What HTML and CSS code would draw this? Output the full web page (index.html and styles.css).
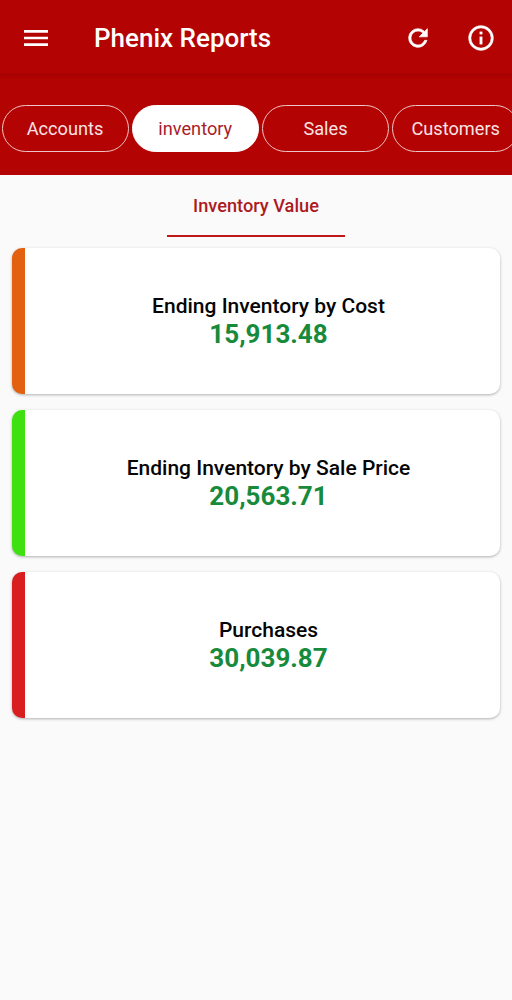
FILE: index.html
```html
<!DOCTYPE html>
<html lang="en">
<head>
<meta charset="utf-8">
<title>Phenix Reports</title>
<link rel="stylesheet" href="styles.css">
</head>
<body>
<header class="appbar">
  <button class="icon-btn menu" aria-label="Menu">
    <svg viewBox="0 0 24 24"><path d="M3 18h18v-2H3v2zm0-5h18v-2H3v2zm0-7v2h18V6H3z" fill="#fff"/></svg>
  </button>
  <h1 class="title">Phenix Reports</h1>
  <button class="icon-btn refresh" aria-label="Refresh">
    <svg width="28" height="28" viewBox="0 0 24 24"><path d="M17.65 6.35A7.96 7.96 0 0 0 12 4a8 8 0 1 0 7.73 10h-2.08A6 6 0 1 1 12 6c1.66 0 3.14.69 4.22 1.78L13 11h7V4l-2.35 2.35z" fill="#fff" stroke="#fff" stroke-width=".6"/></svg>
  </button>
  <button class="icon-btn info" aria-label="Info">
    <svg width="30" height="30" viewBox="0 0 24 24"><path d="M11 7h2v2h-2V7zm0 4h2v6h-2v-6zm1-9a10 10 0 1 0 0 20 10 10 0 0 0 0-20zm0 18a8 8 0 1 1 0-16 8 8 0 0 1 0 16z" fill="#fff" stroke="#fff" stroke-width=".25"/></svg>
  </button>
</header>
<nav class="tabs">
  <span class="tab">Accounts</span>
  <span class="tab active">inventory</span>
  <span class="tab">Sales</span>
  <span class="tab">Customers</span>
</nav>
<main class="content">
  <div class="subtabs"><span class="subtab">Inventory Value</span></div>
  <section class="cards">
    <article class="card orange">
      <div class="label">Ending Inventory by Cost</div>
      <div class="value">15,913.48</div>
    </article>
    <article class="card green">
      <div class="label">Ending Inventory by Sale Price</div>
      <div class="value">20,563.71</div>
    </article>
    <article class="card red">
      <div class="label">Purchases</div>
      <div class="value">30,039.87</div>
    </article>
  </section>
</main>
</body>
</html>
```
FILE: styles.css
```css
* { box-sizing: border-box; }
html, body { margin: 0; padding: 0; }
body {
  width: 512px;
  height: 1000px;
  overflow: hidden;
  background: #fbfafa;
  font-family: Roboto, "Liberation Sans", sans-serif;
}
.appbar {
  height: 74px;
  padding-top: 2px;
  background: #b30303;
  display: flex;
  align-items: center;
  border-bottom: 1px solid #ab0303;
  box-shadow: 0 2px 3px rgba(120, 0, 0, .25);
  position: relative;
}
.icon-btn {
  background: none;
  border: 0;
  padding: 0;
  display: flex;
  align-items: center;
  justify-content: center;
}
.menu { margin-left: 20px; width: 32px; height: 32px; }
.menu svg { width: 32px; height: 32px; }
.title {
  margin: 0 0 0 42px;
  flex: 1;
  color: #fff;
  font-size: 26px;
  font-weight: 500;
}
.refresh { width: 28px; height: 28px; margin-right: 34px; }
.info { width: 30px; height: 30px; margin-right: 16px; }
.tabs {
  height: 101px;
  background: #b30303;
  display: flex;
  gap: 3.25px;
  padding: 31px 0 0 1.5px;
  overflow: hidden;
}
.tab {
  flex: none;
  width: 127px;
  height: 47px;
  border: 1.5px solid #f0c4c4;
  border-radius: 24px;
  color: #f8e4e4;
  font-size: 18.2px;
  display: flex;
  align-items: center;
  justify-content: center;
}
.tab.active {
  background: #fff;
  border-color: #fff;
  color: #a81c2c;
}
.subtabs { display: flex; justify-content: center; }
.subtab {
  width: 178px;
  height: 62px;
  padding-top: 20px;
  text-align: center;
  color: #ac1a1f;
  font-size: 18.2px;
  font-weight: 500;
  border-bottom: 2px solid #c01818;
}
.cards {
  display: flex;
  flex-direction: column;
  gap: 16px;
  padding: 11px 12px 0;
}
.card {
  height: 146px;
  padding-left: 12px;
  background: #fff;
  border-radius: 10px;
  border-left: 13px solid;
  box-shadow: 0 1px 3px rgba(0, 0, 0, .3);
  display: flex;
  flex-direction: column;
  align-items: center;
  justify-content: center;
}
.orange { border-left-color: #e2600f; }
.green { border-left-color: #3ee010; }
.red { border-left-color: #d81e1e; }
.label {
  color: #050505;
  font-size: 21px;
  font-weight: 500;
  line-height: 26px;
}
.value {
  color: #178a3c;
  font-size: 26px;
  font-weight: 700;
  line-height: 31px;
}
```
